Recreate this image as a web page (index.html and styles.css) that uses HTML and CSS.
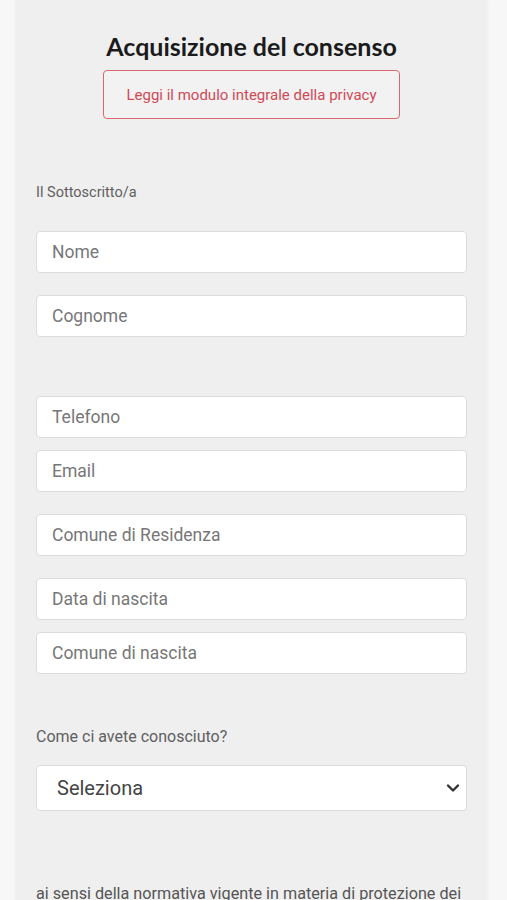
FILE: index.html
```html
<!DOCTYPE html>
<html lang="it">
<head>
<meta charset="utf-8">
<title>Acquisizione del consenso</title>
<link rel="stylesheet" href="styles.css">
</head>
<body>
<div class="card">
  <h1 class="title">Acquisizione del consenso</h1>
  <div class="btn-row"><a class="privacy-btn">Leggi il modulo integrale della privacy</a></div>
  <p class="label label-first">Il Sottoscritto/a</p>
  <input class="field f-nome" type="text" placeholder="Nome">
  <input class="field f-gap" type="text" placeholder="Cognome">
  <input class="field f-big" type="text" placeholder="Telefono">
  <input class="field f-tight" type="text" placeholder="Email">
  <input class="field f-gap" type="text" placeholder="Comune di Residenza">
  <input class="field f-gap" type="text" placeholder="Data di nascita">
  <input class="field f-tight" type="text" placeholder="Comune di nascita">
  <p class="label label-second">Come ci avete conosciuto?</p>
  <div class="select-wrap">
    <select class="select"><option>Seleziona</option></select>
    <svg class="chevron" width="14" height="10" viewBox="0 0 14 10"><path d="M2 2.5 L7 7.5 L12 2.5" fill="none" stroke="#333" stroke-width="2.4" stroke-linecap="round" stroke-linejoin="round"/></svg>
  </div>
  <p class="legal">ai sensi della normativa vigente in materia di protezione dei dati personali</p>
</div>
</body>
</html>
```

FILE: styles.css
```css
html, body {
  margin: 0;
  padding: 0;
  background: #f7f7f7;
  height: 900px;
  overflow: hidden;
}
body {
  font-family: Roboto, "Liberation Sans", sans-serif;
}
.card {
  margin-left: 16px;
  width: 471px;
  box-sizing: border-box;
  padding: 31px 20px 40px;
  background: #efefef;
  box-shadow: 0 0 3px rgba(0,0,0,0.07);
  min-height: 1000px;
  display: flex;
  flex-direction: column;
}
.title {
  margin: 0;
  font-family: Lato, "Open Sans", sans-serif;
  font-weight: 700;
  font-size: 25px;
  line-height: 30px;
  text-align: center;
  color: #1b1b1b;
}
.btn-row {
  display: flex;
  justify-content: center;
  margin-top: 9px;
}
.privacy-btn {
  display: flex;
  align-items: center;
  justify-content: center;
  width: 297px;
  height: 49px;
  box-sizing: border-box;
  border: 1.5px solid #da6770;
  border-radius: 4px;
  color: #cf4a57;
  font-size: 15px;
  background: #f2f2f2;
}
.label {
  margin: 0;
  font-size: 14.5px;
  line-height: 20px;
  color: #606060;
}
.label-first { margin-top: 64px; }
.label-second { margin-top: 53px; font-size: 16px; }
.field {
  display: block;
  width: 431px;
  height: 42px;
  box-sizing: border-box;
  margin: 0;
  padding: 0 15px;
  border: 1px solid #dcdcdc;
  border-radius: 4px;
  background: #fff;
  font-family: Roboto, "Liberation Sans", sans-serif;
  font-size: 17.5px;
  color: #333;
  outline: none;
}
.field::placeholder { color: #777; }
.f-nome { margin-top: 28px; }
.f-gap { margin-top: 22px; }
.f-big { margin-top: 59px; }
.f-tight { margin-top: 12px; }
.select-wrap {
  position: relative;
  margin-top: 18px;
}
.select {
  display: block;
  width: 431px;
  height: 46px;
  box-sizing: border-box;
  padding: 0 40px 0 20px;
  border: 1px solid #dcdcdc;
  border-radius: 4px;
  background: #fff;
  -webkit-appearance: none;
  appearance: none;
  font-family: Roboto, "Liberation Sans", sans-serif;
  font-size: 20px;
  color: #444;
  outline: none;
}
.chevron {
  position: absolute;
  right: 7px;
  top: 18px;
}
.legal {
  margin: 72px 0 0;
  font-size: 16.2px;
  line-height: 22px;
  color: #555;
}
```
